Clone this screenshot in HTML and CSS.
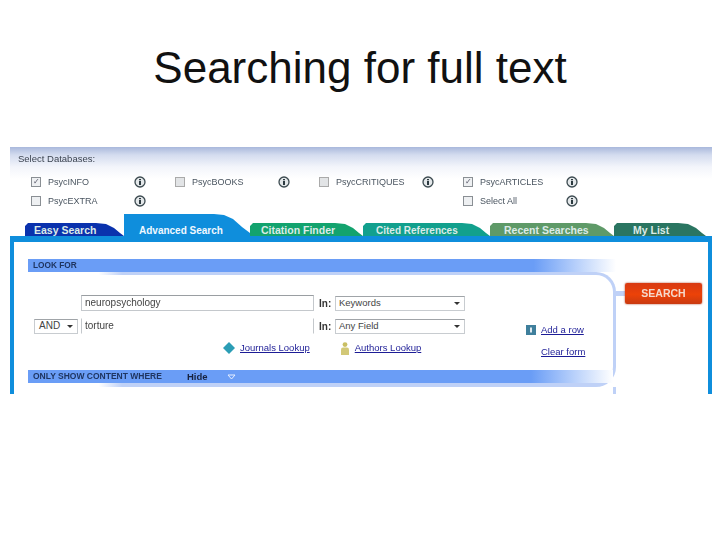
FILE: index.html
```html
<!DOCTYPE html>
<html lang="en">
<head>
<meta charset="utf-8">
<title>Searching for full text</title>
<link rel="stylesheet" href="styles.css">
</head>
<body>
<h1 class="title">Searching for full text</h1>
<section class="shot">
  <svg width="0" height="0" class="defs" aria-hidden="true">
    <symbol id="info" viewBox="0 0 12 12">
      <circle cx="6" cy="6" r="5" fill="#e4e8ea" stroke="#3c4a50" stroke-width="1.3"/>
      <path d="M6 3v1.2M6 5v4" stroke="#2c3a40" stroke-width="2"/>
    </symbol>
  </svg>
  <div class="db">
    <div class="db-title">Select Databases:</div>
    <div class="db-grid">
      <div class="db-item"><span class="check on">&#10003;</span><span class="db-name">PsycINFO</span><svg class="info"><use href="#info"/></svg></div>
      <div class="db-item"><span class="check dim"></span><span class="db-name">PsycBOOKS</span><svg class="info"><use href="#info"/></svg></div>
      <div class="db-item"><span class="check dim"></span><span class="db-name">PsycCRITIQUES</span><svg class="info"><use href="#info"/></svg></div>
      <div class="db-item"><span class="check on">&#10003;</span><span class="db-name">PsycARTICLES</span><svg class="info"><use href="#info"/></svg></div>
      <div class="db-item"><span class="check"></span><span class="db-name">PsycEXTRA</span><svg class="info"><use href="#info"/></svg></div>
      <div class="db-item col4"><span class="check"></span><span class="db-name">Select All</span><svg class="info"><use href="#info"/></svg></div>
    </div>
  </div>
  <nav class="tabs">
    <div class="tab t-easy">Easy Search</div>
    <div class="tab t-adv">Advanced Search</div>
    <div class="tab t-cit">Citation Finder</div>
    <div class="tab t-ref">Cited References</div>
    <div class="tab t-rec">Recent Searches</div>
    <div class="tab t-my">My List</div>
  </nav>
  <div class="panel">
    <div class="form">
      <div class="bar">LOOK FOR</div>
      <div class="card">
        <div class="rows">
          <div class="c1"></div>
          <div class="field">neuropsychology</div>
          <div class="in">In:</div>
          <div class="select">Keywords<span class="caret"></span></div>
          <div class="c5"></div>

          <div class="c1"><div class="select op">AND<span class="caret"></span></div></div>
          <div class="field open">torture</div>
          <div class="in">In:</div>
          <div class="select">Any Field<span class="caret"></span></div>
          <div class="c5 add">
            <svg class="plus" viewBox="0 0 10 10"><rect width="10" height="10" fill="#3f7f9c"/><path d="M5 2.500v5" stroke="#dfeaf0" stroke-width="2"/></svg>
            <a href="#" class="link">Add a row</a>
          </div>

          <div class="lookups">
            <svg class="jicon" viewBox="0 0 12 12"><path d="M6 0l6 6-6 6-6-6z" fill="#2b9db5"/></svg>
            <a href="#" class="link">Journals Lookup</a>
            <svg class="aicon" viewBox="0 0 10 13"><circle cx="5" cy="2.600" r="2.400" fill="#c9bf63"/><path d="M1 13V7.500q0-2 2-2h4q2 0 2 2V13z" fill="#d2c877"/></svg>
            <a href="#" class="link">Authors Lookup</a>
          </div>
          <div class="c5 clear"><a href="#" class="link">Clear form</a></div>
        </div>
        <div class="bar only"><span>ONLY SHOW CONTENT WHERE</span><b class="hide">Hide</b><svg class="tri" viewBox="0 0 9 6"><path d="M1 1h7L4.500 5z" fill="none" stroke="#e6eeff" stroke-width="1"/></svg></div>
      </div>
      <div class="tail"></div>
    </div>
    <div class="side">
      <span class="connector"></span>
      <div class="search">SEARCH</div>
    </div>
  </div>
</section>
</body>
</html>
```
FILE: styles.css
```css
* { box-sizing: border-box; }
html, body { margin: 0; padding: 0; }
body { width: 720px; height: 540px; background: #fff; font-family: "Liberation Sans", Arial, sans-serif; overflow: hidden; }
.title { margin: 0; height: 147px; padding-top: 42px; text-align: center; font-weight: 400; font-size: 44px; line-height: 52px; color: #111; }
.defs { position: absolute; }
.shot { margin-left: 10px; width: 702px; height: 247px; filter: blur(0.4px); }
.db { height: 67px; padding: 6px 0 0 8px; background: linear-gradient(#a9b8dc 0, #d4dcef 8px, #f3f5fb 20px, #fff 32px); }
.db-title { font-size: 9.500px; line-height: 12px; color: #3b4350; }
.db-grid { margin: 7px 0 0 13px; display: grid; grid-template-columns: repeat(4, 144px); grid-auto-rows: 19px; }
.db-item { display: flex; align-items: center; font-size: 9px; color: #4a5560; height: 19px; }
.col4 { grid-column: 4; }
.check { width: 10px; height: 10px; border: 1px solid #8a8f94; background: #eef0f2; font-size: 8px; line-height: 8px; color: #556; text-align: center; flex: none; }
.check.dim { background: #e2e4e6; border-color: #aaa; }
.db-name { margin-left: 7px; width: 86px; }
.info { width: 12px; height: 12px; flex: none; }
.tabs { display: flex; align-items: flex-end; height: 22px; padding-left: 15px; color: #fff; }
.tab { height: 13px; font-size: 10.500px; line-height: 15px; font-weight: 700; color: #dcebe8; clip-path: polygon(0 3px, 3px 0, calc(100% - 28px) 0, calc(100% - 18px) 1px, calc(100% - 10px) 5px, calc(100% - 4px) 10px, 100% 100%, 0 100%); }
.t-easy { width: 99px; padding-left: 9px; background: #0a32ad; }
.t-adv { width: 126px; height: 22px; padding: 10px 0 0 15px; font-size: 10px; line-height: 14px; background: #0f8edc; color: #f0f8ff; clip-path: polygon(0 0, calc(100% - 36px) 0, calc(100% - 26px) 1px, calc(100% - 17px) 5px, calc(100% - 8px) 13px, 100% 19px, 100% 100%, 0 100%); }
.t-cit { width: 113px; padding-left: 11px; background: #13a36e; }
.t-ref { width: 127px; padding: 1px 0 0 13px; background: #12a08d; font-size: 10px; line-height: 14px; }
.t-rec { width: 124px; padding-left: 14px; background: #5f9a68; }
.t-my { width: 92px; padding-left: 19px; background: #2a7561; }
.panel { height: 158px; border: 4px solid #0f8edc; border-top-width: 6px; border-bottom: 0; padding: 17px 0 0 14px; background: #fff; display: flex; }
.form { width: 588px; flex: none; }
.bar { height: 13px; padding-left: 5px; font-size: 8.300px; line-height: 13px; font-weight: 700; color: #1f3560; background: linear-gradient(90deg, #6a9df6 0, #6a9df6 86%, #fff 100%); }
.card { height: 115px; border: 3px solid transparent; border-left: 0; border-bottom-width: 4px; border-radius: 0 20px 20px 0; background: linear-gradient(#fff, #fff) padding-box, linear-gradient(90deg, #fff 12%, #bfd1f7 16%) border-box; display: flex; flex-direction: column; }
.rows { padding-top: 20px; display: grid; grid-template-columns: 53px 233px 21px 130px 121px; grid-template-rows: 16px 16px 14px; row-gap: 7px; align-items: center; }
.c1 { padding-left: 6px; }
.field { height: 16px; border: 1px solid #c4c8cc; border-top-color: #9a9ea2; font-size: 10px; line-height: 14px; padding-left: 3px; color: #444; }
.field.open { border-top-color: transparent; border-bottom-color: transparent; background: #fff; }
.in { padding-left: 5px; font-size: 10px; font-weight: 700; color: #333; }
.select { height: 15px; position: relative; border: 1px solid #c8ccd0; border-top-color: #a0a4a8; font-size: 9.500px; line-height: 12px; padding-left: 3px; color: #444; background: #fff; white-space: nowrap; }
.op { width: 44px; font-size: 10px; padding-left: 4px; }
.caret { position: absolute; right: 4px; top: 5px; border: 3px solid transparent; border-top: 3px solid #333; border-bottom: 0; }
.lookups { grid-column: 2 / 5; display: flex; align-items: center; padding-left: 142px; }
.jicon { width: 12px; height: 12px; margin-right: 5px; }
.aicon { width: 10px; height: 13px; margin: 0 5px 0 30px; }
.link { font-size: 9.500px; line-height: 12px; color: #1c1c96; text-decoration: underline; white-space: nowrap; }
.c5 { display: flex; align-items: center; white-space: nowrap; padding-left: 61px; }
.add { position: relative; top: 4px; }
.plus { width: 10px; height: 10px; margin-right: 5px; flex: none; }
.clear { padding-left: 76px; position: relative; top: 4px; }
.only { margin-top: auto; display: flex; align-items: center; font-size: 8.500px; }
.only span { width: 154px; }
.hide { font-size: 9.500px; color: #18233f; }
.tri { width: 9px; height: 6px; margin-left: 19px; }
.tail { width: 3px; height: 7px; margin-left: auto; background: #bfd1f7; }
.side { display: flex; align-items: center; height: 21px; margin-top: 24px; }
.connector { width: 9px; height: 5px; background: #bfd1f7; }
.search { width: 77px; height: 21px; border-radius: 2px; background: linear-gradient(#d83a12, #ec4208 55%, #c93a10); box-shadow: 0 0 2px #a83a20; color: #f4d9cc; font-size: 10.500px; font-weight: 700; line-height: 21px; text-align: center; }
```
